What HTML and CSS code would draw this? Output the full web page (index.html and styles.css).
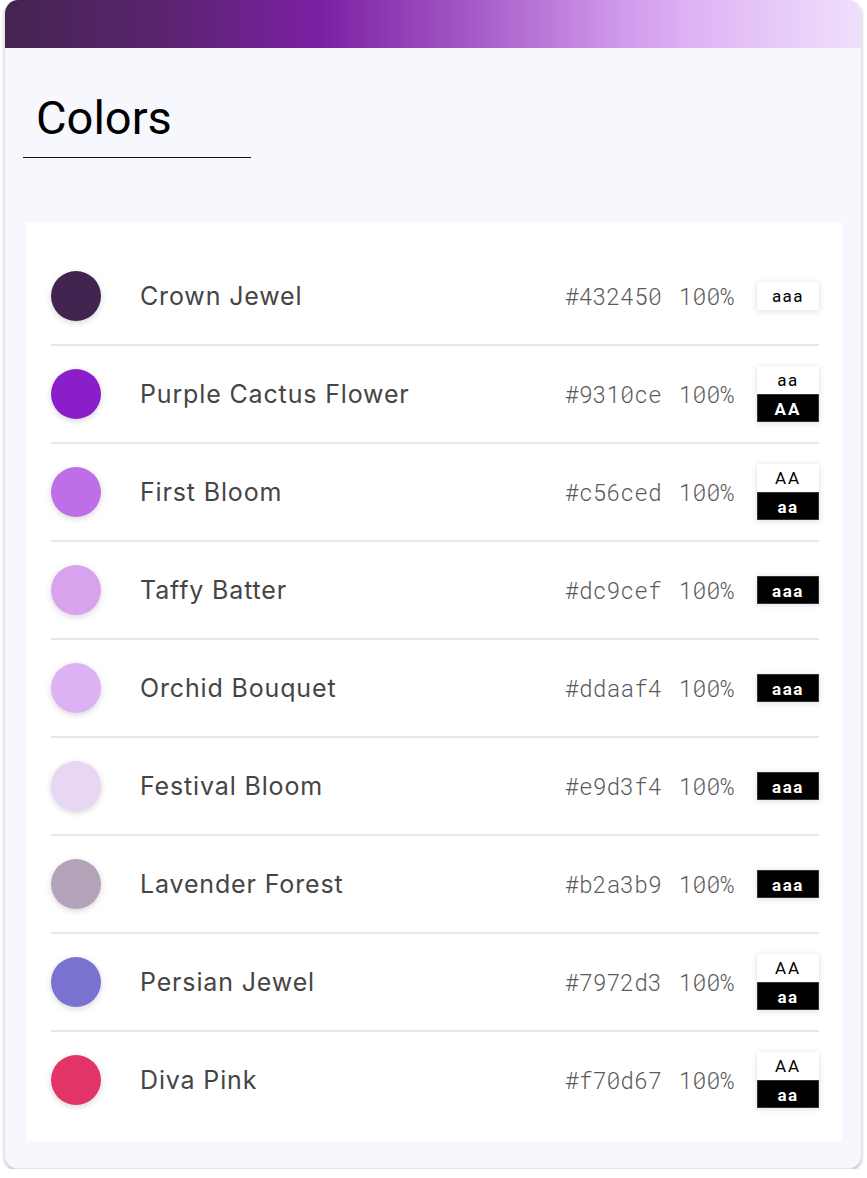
FILE: index.html
```html
<!DOCTYPE html>
<html>
<head>
<meta charset="utf-8">
<link rel="stylesheet" href="styles.css">
</head>
<body>
<div class="card">
  <div class="card-header"></div>
  <div class="title-wrap"><h1 class="title">Colors</h1></div>
  <div class="panel">
    <div class="row">
      <span class="swatch" style="background:#432450"></span>
      <span class="name">Crown Jewel</span>
      <span class="hex">#432450</span><span class="pct">100%</span>
      <span class="badge"><span class="b-light">aaa</span></span>
    </div>
    <div class="row">
      <span class="swatch" style="background:#8a1ec8"></span>
      <span class="name">Purple Cactus Flower</span>
      <span class="hex">#9310ce</span><span class="pct">100%</span>
      <span class="badge"><span class="b-light">aa</span><span class="b-dark caps">AA</span></span>
    </div>
    <div class="row">
      <span class="swatch" style="background:#bd6ee8"></span>
      <span class="name">First Bloom</span>
      <span class="hex">#c56ced</span><span class="pct">100%</span>
      <span class="badge"><span class="b-light caps">AA</span><span class="b-dark">aa</span></span>
    </div>
    <div class="row">
      <span class="swatch" style="background:#d8a2ec"></span>
      <span class="name">Taffy Batter</span>
      <span class="hex">#dc9cef</span><span class="pct">100%</span>
      <span class="badge"><span class="b-dark">aaa</span></span>
    </div>
    <div class="row">
      <span class="swatch" style="background:#dcb2f2"></span>
      <span class="name">Orchid Bouquet</span>
      <span class="hex">#ddaaf4</span><span class="pct">100%</span>
      <span class="badge"><span class="b-dark">aaa</span></span>
    </div>
    <div class="row">
      <span class="swatch" style="background:#e7d7f2"></span>
      <span class="name">Festival Bloom</span>
      <span class="hex">#e9d3f4</span><span class="pct">100%</span>
      <span class="badge"><span class="b-dark">aaa</span></span>
    </div>
    <div class="row">
      <span class="swatch" style="background:#b2a3b9"></span>
      <span class="name">Lavender Forest</span>
      <span class="hex">#b2a3b9</span><span class="pct">100%</span>
      <span class="badge"><span class="b-dark">aaa</span></span>
    </div>
    <div class="row">
      <span class="swatch" style="background:#7972d0"></span>
      <span class="name">Persian Jewel</span>
      <span class="hex">#7972d3</span><span class="pct">100%</span>
      <span class="badge"><span class="b-light caps">AA</span><span class="b-dark">aa</span></span>
    </div>
    <div class="row">
      <span class="swatch" style="background:#e33468"></span>
      <span class="name">Diva Pink</span>
      <span class="hex">#f70d67</span><span class="pct">100%</span>
      <span class="badge"><span class="b-light caps">AA</span><span class="b-dark">aa</span></span>
    </div>
  </div>
</div>
</body>
</html>
```
FILE: styles.css
```css
html, body {
  margin: 0;
  padding: 0;
  background: #ffffff;
}

.card {
  margin: 0 5px 0 4px;
  height: 1169px;
  box-sizing: border-box;
  background: #f7f8fd;
  border: 1px solid #e4e5ec;
  border-top: none;
  border-radius: 14px;
  box-shadow: 0 2px 3px rgba(0, 0, 0, 0.25);
  overflow: hidden;
}

.card-header {
  height: 48px;
  background: linear-gradient(90deg, #432450 0%, #5d2472 20%, #7b20a3 37%, #a65bc8 55%, #cc92e8 70%, #dfb2f5 80%, #efe0fb 100%);
}

.title-wrap {
  margin-left: 18px;
  width: 228px;
  padding-top: 46px;
  padding-bottom: 15px;
  border-bottom: 1px solid #111;
}

.title {
  margin: 0;
  padding-left: 13px;
  font-family: Roboto, "Liberation Sans", sans-serif;
  font-weight: 400;
  font-size: 47px;
  line-height: 48px;
  color: #000;
}

.panel {
  margin: 64px 19px 0 21px;
  height: 919px;
  box-sizing: border-box;
  padding: 26px 23px 0 25px;
  background: #ffffff;
  overflow: hidden;
}

.row {
  display: flex;
  align-items: center;
  height: 96px;
  border-bottom: 2px solid #e6e6ed;
}

.row:last-child {
  border-bottom: none;
}

.swatch {
  flex: none;
  width: 50px;
  height: 50px;
  border-radius: 50%;
  box-shadow: 0 2px 6px rgba(0, 0, 0, 0.16);
  margin-right: 39px;
}

.name {
  flex: 1;
  font-family: Inter, "Noto Sans", sans-serif;
  font-size: 25px;
  color: #454545;
  letter-spacing: 0.85px;
}

.hex, .pct {
  font-family: "Roboto Mono", "DejaVu Sans Mono", "Liberation Mono", monospace;
  font-size: 23px;
  color: #5a5a5a;
  font-weight: 300;
}

.pct {
  margin-left: 17px;
}

.badge {
  flex: none;
  margin-left: 23px;
  width: 62px;
  display: flex;
  flex-direction: column;
  box-shadow: 0 1px 6px rgba(0, 0, 0, 0.14);
}

.b-light, .b-dark {
  display: block;
  height: 28px;
  line-height: 28px;
  text-align: center;
  font-family: Roboto, "Liberation Sans", sans-serif;
  font-size: 17px;
  letter-spacing: 1.5px;
}

.b-light {
  background: #fff;
  color: #000;
}

.b-dark {
  background: #000;
  color: #fff;
  font-weight: 700;
  border: 1px solid #333;
  box-sizing: border-box;
}

.caps {
  letter-spacing: 2px;
}
```
